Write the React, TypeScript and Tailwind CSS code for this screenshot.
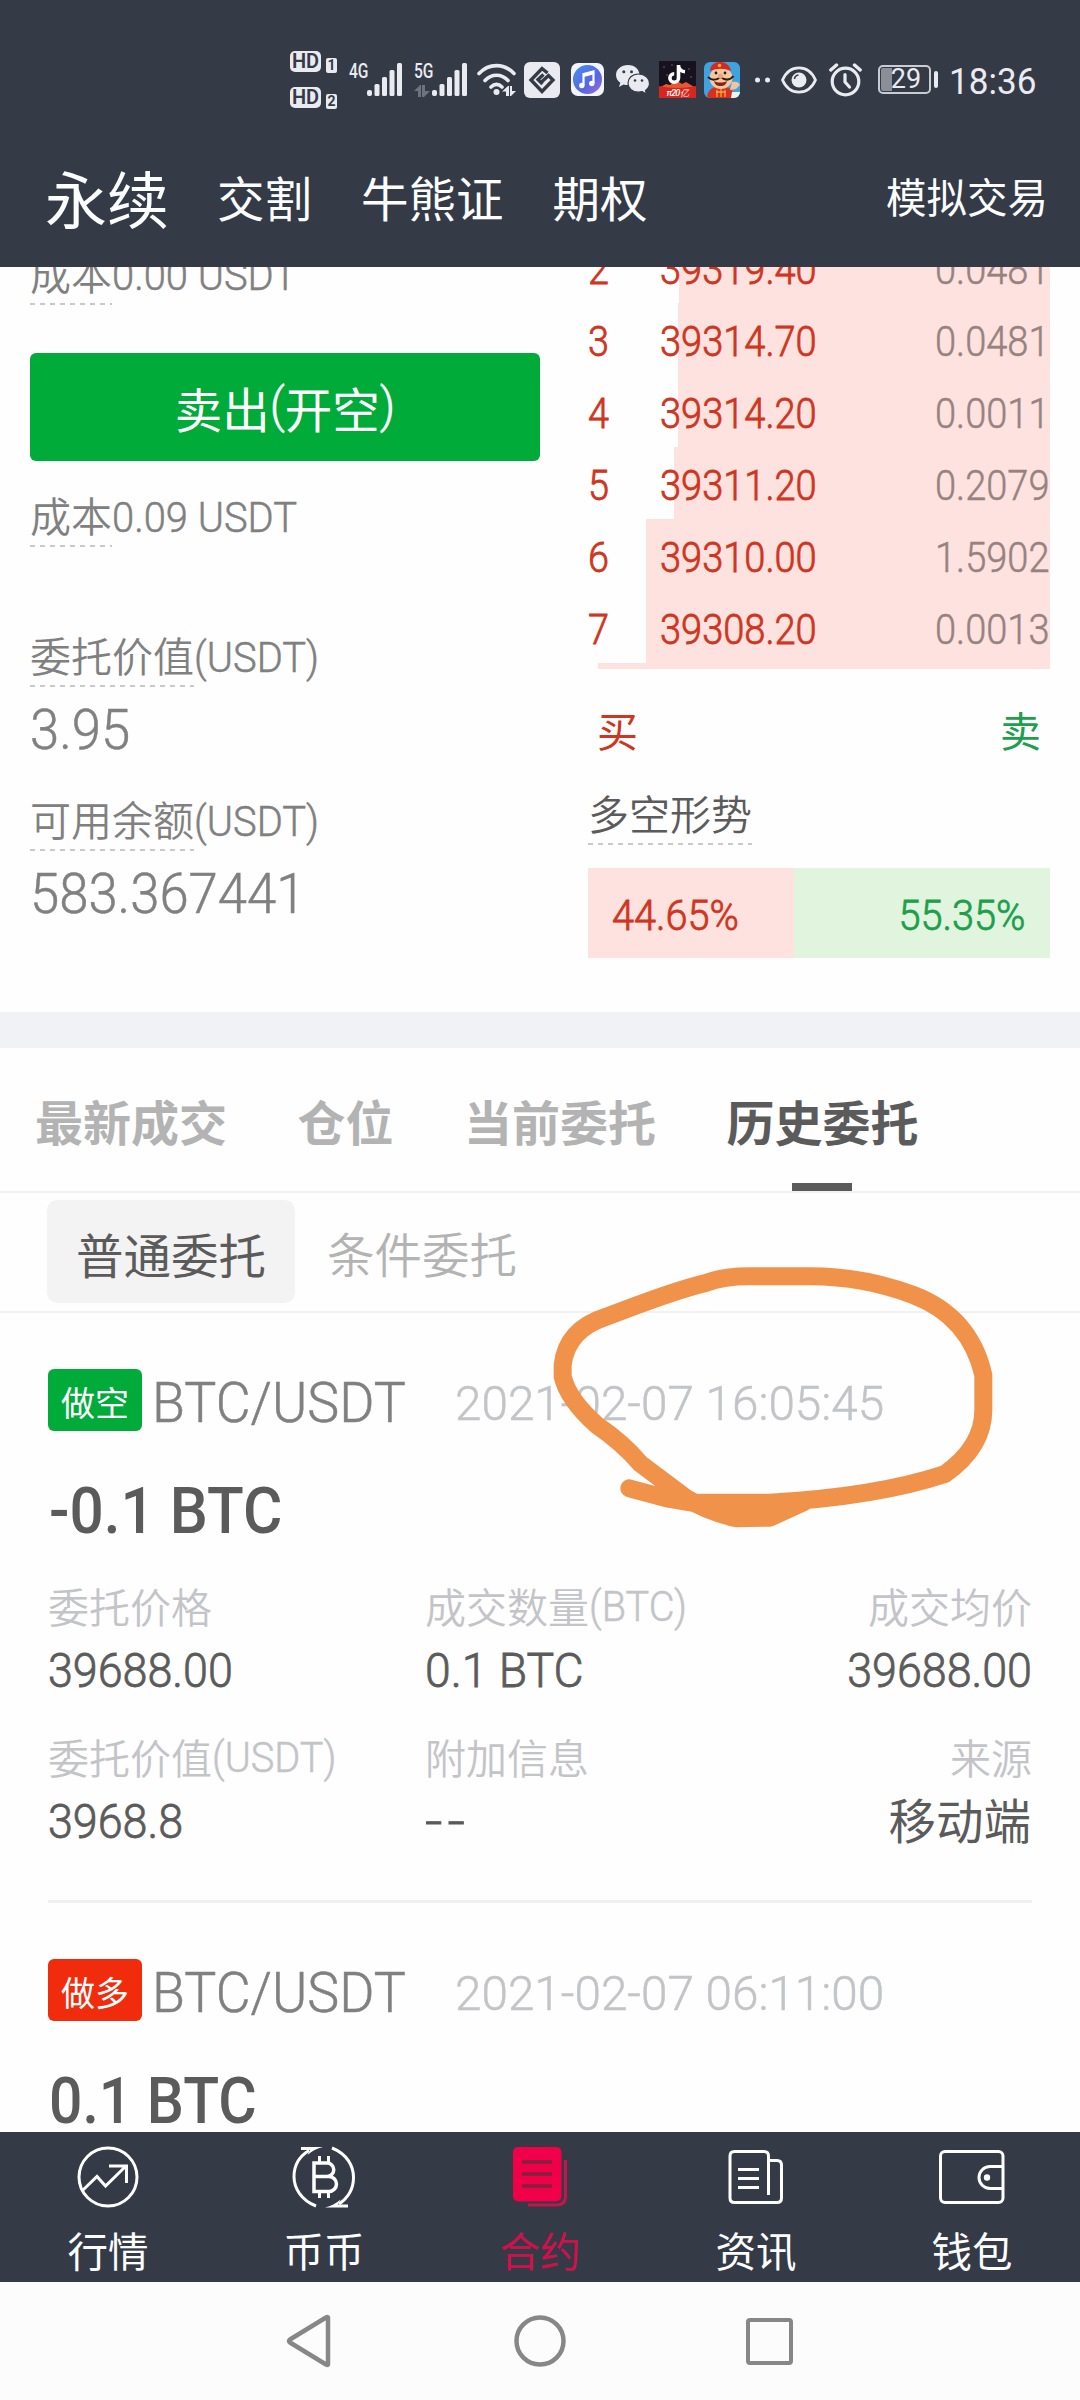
import React from "react";

const zhFont = "font-['Noto_Sans_CJK_SC',sans-serif]";
const latinFont = "font-['Roboto',sans-serif]";

/* Chinese run, nudged so the glyph body is centred on its line */
function Zh({ children, className = "" }: { children: React.ReactNode; className?: string }) {
  return (
    <span className={`${zhFont} inline-block leading-none whitespace-nowrap -translate-y-[0.04em] ${className}`}>
      {children}
    </span>
  );
}

/* Latin / numeric run, slightly condensed */
function Num({ children, className = "" }: { children: React.ReactNode; className?: string }) {
  return (
    <span className={`${latinFont} inline-block leading-none whitespace-pre ${className}`}>{children}</span>
  );
}

/* Weights between Roboto Light and Regular */
const thin = "font-light [-webkit-text-stroke:0.5px_currentColor]";
const book = "font-light [-webkit-text-stroke:0.8px_currentColor]";

const dash = "h-[2px] bg-[repeating-linear-gradient(90deg,#c9c9c9_0_5px,transparent_5px_10px)]";

function SignalBars() {
  return (
    <svg width="36" height="34" viewBox="0 0 36 34" fill="#e9ebf0">
      <rect x="0" y="27" width="5" height="6" rx="2" />
      <rect x="7.5" y="21" width="5" height="12" rx="1.5" />
      <rect x="15" y="14" width="5" height="19" rx="1.5" />
      <rect x="22.500" y="7" width="5" height="26" rx="1.5" />
      <rect x="30" y="0" width="5" height="33" rx="1.5" />
    </svg>
  );
}

function HdMark({ n }: { n: string }) {
  return (
    <div className="flex h-[22px] items-end">
      <span className={`${latinFont} mb-px flex h-[21px] w-[31px] items-center justify-center rounded-[5px] bg-[#e9ebf0] text-[20px] leading-none font-semibold text-[#343a46]`}>
        HD
      </span>
      <span className={`${latinFont} ml-[5px] flex h-[15px] w-[11px] items-center justify-center rounded-[2px] bg-[#e9ebf0] text-[14px] leading-none font-bold text-[#343a46]`}>
        {n}
      </span>
    </div>
  );
}

function StatusBar() {
  return (
    <div className="flex h-[159px] items-center pl-[290px] text-[#e9ebf0]">
      <div className="flex w-[59px] flex-col gap-[14px]">
        <HdMark n="1" />
        <HdMark n="2" />
      </div>
      <div className="flex h-[34px] w-[65px]">
        <Num className="w-[18px] origin-left -translate-y-[2px] scale-x-[.78] text-[20px] font-medium">4G</Num>
        <SignalBars />
      </div>
      <div className="relative flex h-[34px] w-[63px]">
        <Num className="w-[18px] origin-left -translate-y-[2px] scale-x-[.78] text-[20px] font-medium">5G</Num>
        <SignalBars />
        <svg className="absolute top-[22px] left-0" width="16" height="12" viewBox="0 0 16 12" fill="#6d7380">
          <path d="M0 6 6 0h1v12H4V6zM8 0h3v6h5l-6 6H8z" />
        </svg>
      </div>
      <svg width="40" height="34" viewBox="0 0 40 34" fill="none" stroke="#e9ebf0" strokeWidth="3.600" strokeLinecap="round">
        <path d="M2 10.500C12 0 27 0 37 10.500M8 17.500C14.500 10.500 24.500 10.500 31 17.500M14 24c3.500-3.500 7.500-3.500 11 0" />
        <circle cx="19.500" cy="29" r="3" fill="#e9ebf0" stroke="none" />
        <path d="M25 28.500 31 23h1v10h-3v-4.500zM33 23h2v5h4l-5 5h-1z" fill="#e9ebf0" stroke="none" />
      </svg>
      <svg className="ml-[7px]" width="36" height="36" viewBox="0 0 36 36">
        <rect width="36" height="36" rx="6" fill="#e9ebf0" />
        <path d="M23.500 11 18 6.500 7 18 18 29.500 29 18 24.500 13.500 17.500 20M19.500 12.500 14 17.500 18.500 22" fill="none" stroke="#343a46" strokeWidth="3.400" />
      </svg>
      <svg className="ml-[11px]" width="33" height="33" viewBox="0 0 33 33">
        <defs>
          <linearGradient id="music" x1="0" y1="0" x2="1" y2="1">
            <stop offset="0" stopColor="#4a8df0" />
            <stop offset=".6" stopColor="#5468e0" />
            <stop offset="1" stopColor="#a86ae0" />
          </linearGradient>
        </defs>
        <rect width="33" height="33" rx="7" fill="#f4f5fc" />
        <circle cx="16.500" cy="16.500" r="14.500" fill="url(#music)" />
        <path d="M12.500 22.500V11l10-2.500V20" fill="none" stroke="#fff" strokeWidth="2.200" />
        <path d="M12.500 11l10-2.500v3l-10 2.500z" fill="#fff" />
        <circle cx="10.800" cy="22.500" r="2.700" fill="#fff" />
        <circle cx="20.800" cy="20.500" r="2.700" fill="#fff" />
      </svg>
      <svg className="ml-[12px]" width="34" height="29" viewBox="0 0 34 29">
        <path d="M12 0C5 0 0 4.500 0 10c0 3.200 1.700 6 4.300 7.800L3 22l4.500-2.500c1.500.4 3 .6 4.500.6 7 0 11.500-4.600 11.500-10S19 0 12 0z" fill="#e9ebf0" />
        <circle cx="7.800" cy="6.800" r="1.500" fill="#343a46" />
        <circle cx="15.500" cy="6.800" r="1.500" fill="#343a46" />
        <path d="M22.500 9C16 9 12 13.300 12 18.200s4 9 10.500 9c1.300 0 2.500-.2 3.700-.5L30.500 29l-1-3.500c2.500-1.800 4-4.300 4-7.300C33.500 13.300 29 9 22.500 9z" fill="#e9ebf0" stroke="#343a46" strokeWidth="1.200" />
        <circle cx="19" cy="15.500" r="1.300" fill="#343a46" />
        <circle cx="26" cy="15.500" r="1.300" fill="#343a46" />
      </svg>
      <svg className="ml-[9px]" width="37" height="37" viewBox="0 0 37 37">
        <rect width="37" height="37" fill="#16121f" />
        <path d="M0 27 7 23l4 1 6-5 6 4 4-2 10 6v10H0z" fill="#e8582c" />
        <path d="M0 25q18 4 37 0v12H0z" fill="#d8251f" />
        <g fill="#6b3a3a">
          <circle cx="5" cy="6" r="1" /><circle cx="30" cy="8" r="1" /><circle cx="8" cy="14" r="1" /><circle cx="32" cy="16" r="1" /><circle cx="13" cy="4" r="1" />
        </g>
        <path d="M19.500 4v13a4.300 4.300 0 1 1-4.300-4.300M19.500 5c.6 3.500 3 5.500 6.500 5.800" fill="none" stroke="#fff" strokeWidth="3.600" />
        <text x="18.500" y="35" textAnchor="middle" fontFamily="Roboto, sans-serif" fontSize="9" fontStyle="italic" fontWeight="500" fill="#fff" textLength="22">π20亿</text>
      </svg>
      <svg className="ml-[8px]" width="36" height="36" viewBox="0 0 36 36">
        <defs>
          <clipPath id="mascot"><rect width="36" height="36" rx="6" /></clipPath>
        </defs>
        <g clipPath="url(#mascot)">
          <rect width="36" height="36" fill="#3fa3e0" />
          <path d="M3 36c0-8 6-12 14-12s13 4 13 12z" fill="#d8301f" />
          <path d="M28 20c4-1 7 0 8 3l-4 4-6 1z" fill="#f3c39c" />
          <ellipse cx="17" cy="16" rx="11.500" ry="11" fill="#f5c8a0" />
          <path d="M6 9C6 3 11 0 16 0s10 3 11 9c-7-3-14-3-21 0z" fill="#d5291f" />
          <circle cx="15.500" cy="3.500" r="1.800" fill="#f0a93c" />
          <path d="M4 15c4 4 9 3 12.500 0 4 3 9 4 13-1" fill="none" stroke="#2d1c18" strokeWidth="2" />
          <circle cx="12" cy="11" r="1.400" fill="#2d1c18" />
          <circle cx="21" cy="11" r="1.400" fill="#2d1c18" />
          <circle cx="16.500" cy="14" r="2.600" fill="#eda57c" />
          <path d="M10 19c4 2 9 2 13 0-1 4-3 5-6.500 5S11 23 10 19z" fill="#8c1d18" />
          <path d="M13 28v7M17 27v8M21 28v7M12 30h10" stroke="#f0a93c" strokeWidth="1.300" />
          <path d="M28 30h8v6h-9z" fill="#eef3f6" />
        </g>
      </svg>
      <svg className="ml-[14px]" width="17" height="6" viewBox="0 0 17 6" fill="#e9ebf0">
        <circle cx="3.500" cy="3" r="2.500" />
        <circle cx="13.500" cy="3" r="2.500" />
      </svg>
      <svg className="ml-[10px]" width="36" height="28" viewBox="0 0 36 28" fill="none" stroke="#e9ebf0" strokeWidth="2.800">
        <path d="M1.500 14C5 6 11 1.800 18 1.800S31 6 34.500 14C31 22 25 26.200 18 26.200S5 22 1.500 14z" strokeLinejoin="round" />
        <circle cx="18" cy="14" r="7.500" fill="#e9ebf0" stroke="none" />
        <path d="M13.500 13a4.500 4.500 0 0 1 4-4" stroke="#343a46" strokeWidth="1.500" />
      </svg>
      <svg className="ml-[12px]" width="33" height="34" viewBox="0 0 33 34" fill="none" stroke="#e9ebf0" strokeLinecap="round">
        <circle cx="16.500" cy="18.500" r="13.300" strokeWidth="3.200" />
        <path d="M1.800 7 7.500 2M31.200 7l-5.700-5" strokeWidth="3.400" />
        <path d="M16 11.500v7.500l4.500 5" strokeWidth="3.200" />
      </svg>
      <div className="ml-[16px] flex h-[29px] w-[53px] items-center justify-center rounded-[5px] border-2 border-[#c9ccd3] bg-[linear-gradient(90deg,#8a8e97_0_11px,transparent_11px)] bg-origin-content bg-clip-content p-px">
        <Num className="ml-[3px] text-[27px]">29</Num>
      </div>
      <div className="ml-[3px] h-[17px] w-[4px] rounded-[2px] bg-[#e9ebf0]" />
      <Num className="ml-[11px] origin-left translate-y-[2px] scale-x-[.975] text-[36px]">18:36</Num>
    </div>
  );
}

const asks = [
  { n: 2, price: "39319.40", qty: "0.0481", w: 371 },
  { n: 3, price: "39314.70", qty: "0.0481", w: 372 },
  { n: 4, price: "39314.20", qty: "0.0011", w: 372 },
  { n: 5, price: "39311.20", qty: "0.2079", w: 376 },
  { n: 6, price: "39310.00", qty: "1.5902", w: 404 },
  { n: 7, price: "39308.20", qty: "0.0013", w: 404 },
];

function HintLabel({ zh, rest, className = "" }: { zh: string; rest?: string; className?: string }) {
  return (
    <div className={`flex h-[59px] text-[41px] ${className}`}>
      <div className="flex flex-col">
        <div className="flex flex-1 items-center">
          <Zh className="font-[350]">{zh}</Zh>
        </div>
        <div className={dash} />
      </div>
      {rest && (
        <div className="flex h-[59px] items-center">
          <Num className={`origin-left scale-x-[.95] text-[42px] ${thin}`}>{rest}</Num>
        </div>
      )}
    </div>
  );
}

function OrderCard({ side, badge, amount, time, details }: {
  side: string; badge: string; amount: string; time: string; details?: boolean;
}) {
  return (
    <div className="mx-[48px]">
      <div className="flex h-[62px] items-center">
        <div className={`flex h-[62px] w-[94px] items-center justify-center rounded-[6px] pt-[5px] ${badge}`}>
          <Zh className="text-[34px] text-white">{side}</Zh>
        </div>
        <div className="ml-[10px] flex h-full w-[303px] items-center">
          <Num className={`origin-left translate-y-[3px] scale-x-[.96] text-[56px] text-[#808080] ${thin}`}>BTC/USDT</Num>
        </div>
        <Num className={`origin-left translate-y-[3px] scale-x-[.973] text-[49px] text-[#c3c4c8] ${thin}`}>{time}</Num>
      </div>
      <div className="mt-[49px] flex h-[62px] items-center pl-[1px]">
        <Num className={`origin-left text-[65px] font-medium text-[#5b5b5b] ${details ? "scale-x-[.928]" : "scale-x-[.905]"}`}>
          {amount}
        </Num>
      </div>
      {details && (
        <>
          <div className="mt-[34px] grid grid-cols-[377px_1fr_auto] text-[41px] text-[#c3c4c8]">
            <Field label="委托价格" value="39688.00" />
            <Field label="成交数量" unit="(BTC)" value="0.1 BTC" />
            <Field label="成交均价" value="39688.00" end />
            <Field label="委托价值" unit="(USDT)" value="3968.8" />
            <Field label="附加信息" value="--" />
            <Field label="来源" zhValue="移动端" end />
          </div>
          <div className="mt-[22px] h-[3px] bg-[#efefef]" />
        </>
      )}
    </div>
  );
}

function Field({ label, unit, value, zhValue, end }: {
  label: string; unit?: string; value?: string; zhValue?: string; end?: boolean;
}) {
  return (
    <div className={`flex h-[151px] flex-col ${end ? "items-end" : "items-start"}`}>
      <div className="flex h-[62px] items-center">
        <Zh className="font-[350]">{label}</Zh>
        {unit && <Num className={`origin-left scale-x-[.945] text-[42px] ${thin}`}>{unit}</Num>}
      </div>
      <div className="flex h-[64px] items-center text-[#5b5b5b]">
        {value && (
          <Num
            className={`text-[49px] ${book} ${end ? "origin-right" : "origin-left"} ${
              value === "--"
                ? "scale-x-[1.25] tracking-[4px]"
                : value.includes("BTC")
                  ? "scale-x-[.945]"
                  : "scale-x-[.915]"
            }`}
          >
            {value}
          </Num>
        )}
        {zhValue && <Zh className="mr-px text-[47.5px]">{zhValue}</Zh>}
      </div>
    </div>
  );
}

/* Hand-drawn marker loop around the order time */
function MarkerLoop() {
  return (
    <svg className="pointer-events-none absolute top-[1250px] left-[540px]" width="480" height="300" viewBox="0 0 1440 900">
      <path
        d="M268 715 380 745 455 758 690 758Q1010 740 1215 672Q1330 590 1330 480V375Q1290 200 1120 135Q960 75 790 79H640Q555 77 500 98Q400 122 200 200Q80 238 68 345V380Q85 450 170 525Q250 580 300 640L440 745Q500 785 590 805L690 803 790 757"
        fill="none"
        stroke="#f1924b"
        strokeWidth="54"
        strokeLinecap="round"
        strokeLinejoin="round"
      />
      <path d="M430 735H700L800 780 690 803 590 806 480 780z" fill="#f1924b" />
    </svg>
  );
}

const line = { fill: "none", stroke: "#fff", strokeWidth: 3 } as const;

const tabs = [
  {
    label: "行情",
    icon: (
      <svg width="66" height="66" viewBox="0 0 66 66" {...line}>
        <circle cx="33" cy="33" r="29" />
        <path d="M8 46 22 32.500 30.500 42 51 22M34 22h17.500v17" />
      </svg>
    ),
  },
  {
    label: "币币",
    icon: (
      <svg width="66" height="66" viewBox="0 0 66 66" {...line}>
        <path d="M25 62C10 56 3 44 3 32.500 3 20 9 12 18 6.500M41 4C56 10 62.500 22 62.500 33.500 62.500 46 56 54.500 48 60" />
        <path d="M10 3h22C26 4.500 21 7 16.500 11L19 6h-9zM57 63.500H34C40 62 45 59.500 49.500 55.500L47 60.500h10z" fill="#fff" stroke="none" />
        <path d="M23 19h13a6.500 6.500 0 0 1 0 13.500H23zM23 32.500h15a7.500 7.500 0 0 1 0 15H23z" strokeWidth="3.500" />
        <path d="M28.500 12v7M37.500 12v7M28.500 47v7M37.500 47v7" />
      </svg>
    ),
  },
  {
    label: "合约",
    active: true,
    icon: (
      <svg width="66" height="66" viewBox="0 0 66 66">
        <rect x="6" y="3" width="48.500" height="54.500" rx="5" fill="#ef0048" />
        <path d="M15 18h30M15 30h30M15 42h30" stroke="#84203f" strokeWidth="3.500" />
        <path d="M58.500 16v36q0 9-9 9H21" fill="none" stroke="#c2174a" strokeWidth="3" />
      </svg>
    ),
  },
  {
    label: "资讯",
    icon: (
      <svg width="66" height="66" viewBox="0 0 66 66" {...line}>
        <path d="M45.500 51V12q0-4.500-4.500-4.500H11.500Q7 7.500 7 12v42q0 4.500 4.500 4.500H54q4.500 0 4.500-4.500V21q0-4.500-4.500-4.500h-8.500" />
        <path d="M15 25.500h21M15 34.500h21M15 43.500h21" />
      </svg>
    ),
  },
  {
    label: "钱包",
    icon: (
      <svg width="66" height="66" viewBox="0 0 66 66" {...line}>
        <rect x="1.500" y="7.500" width="62.500" height="51" rx="4.500" />
        <path d="M64 22.500H51a11 11 0 0 0 0 22h13" />
        <circle cx="48" cy="33.500" r="3.200" fill="#fff" stroke="none" />
      </svg>
    ),
  },
];

export default function App() {
  return (
    <div className="relative flex h-[2400px] w-[1080px] flex-col overflow-hidden bg-[#fefefe]">
      <header className="h-[267px] shrink-0 bg-[#343a46] text-[#fcfdff]">
        <StatusBar />
        <nav className="flex h-[79px] items-center pr-[32px] pl-[45px] text-[47.5px]">
          <Zh className="text-[62px]">永续</Zh>
          <Zh className="ml-[48px]">交割</Zh>
          <Zh className="ml-[49px]">牛熊证</Zh>
          <Zh className="ml-[49px]">期权</Zh>
          <Zh className="ml-auto text-[40.5px]">模拟交易</Zh>
        </nav>
      </header>

      <section className="flex h-[745px] shrink-0 gap-[48px] overflow-hidden pr-[30px] pl-[30px]">
        <div className="-mt-[21px] w-[510px] text-[#808080]">
          <HintLabel zh="成本" rest="0.00 USDT" />
          <button className="mt-[48px] flex h-[108px] w-full items-center justify-center rounded-[6px] bg-[#00ab39] pt-[6px] text-[47.5px] text-white">
            <Zh>卖出</Zh>
            <Num className={`-translate-y-[3px] ${thin}`}>(</Num>
            <Zh>开空</Zh>
            <Num className={`-translate-y-[3px] ${thin}`}>)</Num>
          </button>
          <HintLabel zh="成本" rest="0.09 USDT" className="mt-[27px]" />
          <HintLabel zh="委托价值" rest="(USDT)" className="mt-[81px]" />
          <div className="mt-[12px] flex h-[60px] items-center pt-[2px]">
            <Num className={`origin-left scale-x-[.94] text-[56px] ${thin}`}>3.95</Num>
          </div>
          <HintLabel zh="可用余额" rest="(USDT)" className="mt-[33px]" />
          <div className="mt-[12px] flex h-[60px] items-center pt-[2px]">
            <Num className={`origin-left scale-x-[.94] text-[56px] ${thin}`}>583.367441</Num>
          </div>
        </div>

        <div className="-mt-[36px] w-[462px]">
          {asks.map((a) => (
            <div key={a.n} className="relative flex h-[72px] items-center pt-[6px] text-[42px] text-[#cf3520]">
              <div className="absolute inset-y-0 right-0 bg-[#fde2df]" style={{ width: a.w }} />
              <Num className={`relative w-[72px] origin-left scale-x-[.9] ${book}`}>{a.n}</Num>
              <Num className={`relative origin-left scale-x-[.905] ${book}`}>{a.price}</Num>
              <Num className={`relative ml-auto origin-right scale-x-[.905] text-[#978280] ${thin}`}>{a.qty}</Num>
            </div>
          ))}
          <div className="ml-[10px] h-[6px] bg-[#fde2df]" />
          <div className="mt-[32px] flex h-[60px] items-center justify-between px-[9px] text-[41px]">
            <Zh className="text-[#cf3520]">买</Zh>
            <Zh className="text-[#1d9f4b]">卖</Zh>
          </div>
          <HintLabel zh="多空形势" className="mt-[25px] text-[#5b5b5b]" />
          <div className="mt-[23px] flex h-[90px] text-[42px]">
            <div className="flex w-[206px] items-center bg-[#fde2df] pt-[6px] pl-[24px] text-[#cf3520]">
              <Num className={`origin-left scale-x-[.945] ${book}`}>44.65%</Num>
            </div>
            <div className="flex flex-1 items-center justify-end bg-[#e0f4de] pt-[6px] pr-[25px] text-[#1d9f4b]">
              <Num className={`origin-right scale-x-[.945] ${book}`}>55.35%</Num>
            </div>
          </div>
        </div>
      </section>

      <div className="h-[36px] shrink-0 bg-[#f0f2f5]" />

      <section className="h-[1084px] shrink-0 overflow-hidden">
        <div className="flex h-[145px] gap-[70.5px] border-b-2 border-[#f0f1f2] pl-[35px] text-[48px] font-bold text-[#b3b3b3]">
          <Zh className="mt-[50px]">最新成交</Zh>
          <Zh className="mt-[50px]">仓位</Zh>
          <Zh className="mt-[50px]">当前委托</Zh>
          <div className="flex flex-col items-center justify-between text-[#5b5b5b]">
            <Zh className="mt-[50px]">历史委托</Zh>
            <div className="h-[8px] w-[60px] -translate-x-px bg-[#5b5b5b]" />
          </div>
        </div>
        <div className="flex h-[120px] items-center border-b-2 border-[#f0f1f2] pl-[47px] text-[47.5px]">
          <div className="-mt-px flex h-[103px] w-[248px] items-center justify-center rounded-[10px] bg-[#f3f3f3] pt-[8px]">
            <Zh className="text-[#5b5b5b]">普通委托</Zh>
          </div>
          <Zh className="mt-[6px] ml-[32px] font-[350] text-[#b3b3b3]">条件委托</Zh>
        </div>
        <div className="h-[56px]" />
        <OrderCard side="做空" badge="bg-[#00ab39]" amount="-0.1 BTC" time="2021-02-07 16:05:45" details />
        <div className="h-[56px]" />
        <OrderCard side="做多" badge="bg-[#f12c0d]" amount="0.1 BTC" time="2021-02-07 06:11:00" />
      </section>

      <nav className="grid h-[150px] shrink-0 grid-cols-5 bg-[#343a46]">
        {tabs.map((t) => (
          <div key={t.label} className={`flex flex-col items-center pt-[12px] ${t.active ? "text-[#d0104a]" : "text-[#fcfdff]"}`}>
            {t.icon}
            <Zh className="mt-[22px] text-[40.5px]">{t.label}</Zh>
          </div>
        ))}
      </nav>

      <div className="flex h-[118px] items-center bg-[#fcfcfc] pl-[286px]">
        <svg width="46" height="54" viewBox="0 0 46 54" fill="none" stroke="#878787" strokeWidth="4.500" strokeLinejoin="round">
          <path d="M42 3.500v47q-.5 1-2 0L4 28.500q-2-1.500 0-3L40 3.500q1.500-1 2 0z" />
        </svg>
        <svg className="ml-[182px]" width="52" height="52" viewBox="0 0 52 52" fill="none" stroke="#878787" strokeWidth="4.500">
          <circle cx="26" cy="26" r="23.500" />
        </svg>
        <div className="ml-[180px] h-[47px] w-[47px] rounded-[4px] border-[4.500px] border-[#878787]" />
      </div>

      <MarkerLoop />
    </div>
  );
}
